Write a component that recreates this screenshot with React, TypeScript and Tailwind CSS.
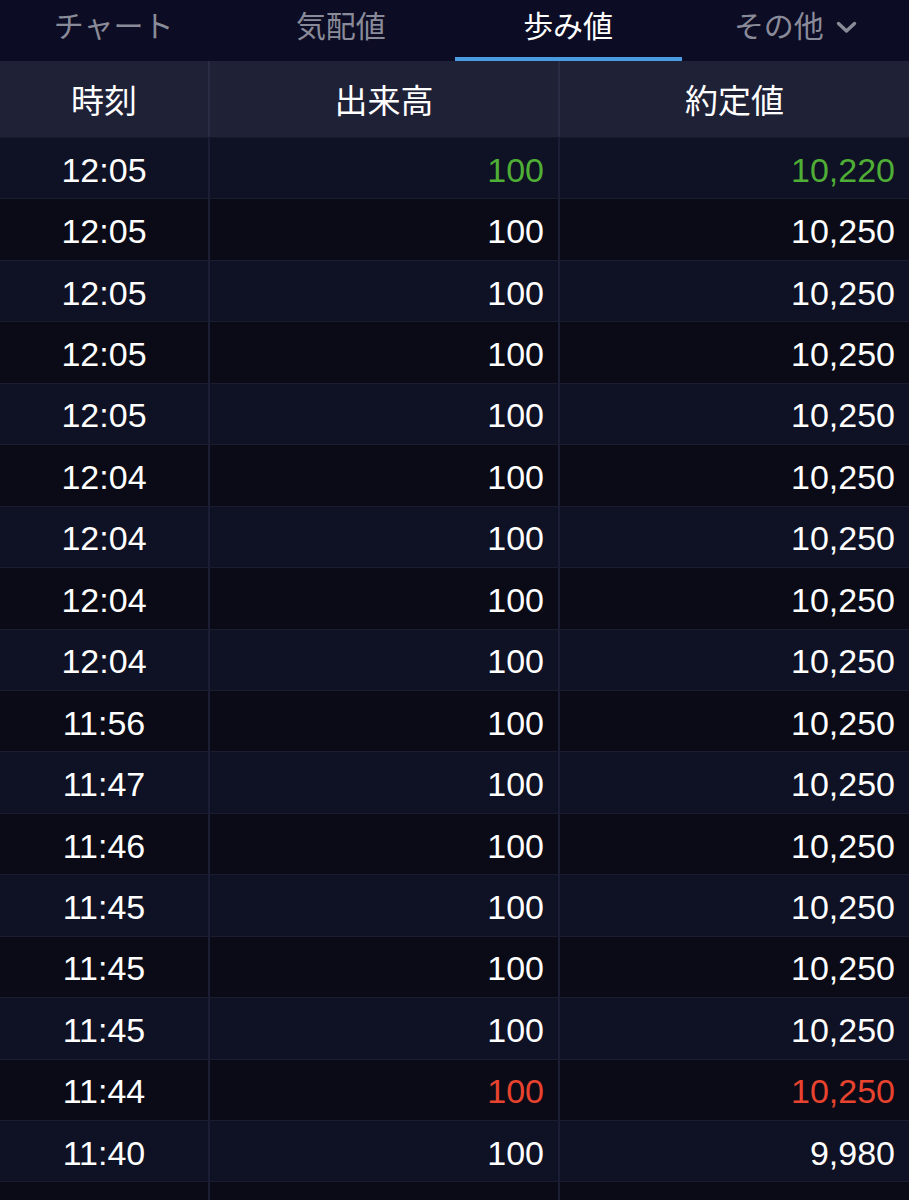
import React from "react";

const rows: [string, string, string, string][] = [
  ["12:05", "100", "10,220", "g"],
  ["12:05", "100", "10,250", "w"],
  ["12:05", "100", "10,250", "w"],
  ["12:05", "100", "10,250", "w"],
  ["12:05", "100", "10,250", "w"],
  ["12:04", "100", "10,250", "w"],
  ["12:04", "100", "10,250", "w"],
  ["12:04", "100", "10,250", "w"],
  ["12:04", "100", "10,250", "w"],
  ["11:56", "100", "10,250", "w"],
  ["11:47", "100", "10,250", "w"],
  ["11:46", "100", "10,250", "w"],
  ["11:45", "100", "10,250", "w"],
  ["11:45", "100", "10,250", "w"],
  ["11:45", "100", "10,250", "w"],
  ["11:44", "100", "10,250", "r"],
  ["11:40", "100", "9,980", "w"],
  ["", "", "", "w"],
];

const font = { fontFamily: '"Liberation Sans", "Noto Sans CJK JP", sans-serif' };

export default function App() {
  return (
    <div className="w-[909px] h-[1200px] overflow-hidden bg-[#0b0c1a] text-white" style={font}>
      {/* Tabs */}
      <div className="flex h-[61px] bg-[#0c0d24]">
        {["チャート", "気配値", "歩み値", "その他"].map((t, i) => (
          <div key={t} className="relative flex-1 flex items-start justify-center pt-[7px]">
            <span className={`text-[30px] leading-[40px] ${i === 2 ? "text-white" : "text-[#8a8b99]"}`}>{t}</span>
            {i === 3 && (
              <svg className="ml-[12px] mt-[13px]" width="21" height="15" viewBox="0 0 21 15">
                <path d="M2.5 3.5 L10.5 11 L18.5 3.5" fill="none" stroke="#8a8b99" strokeWidth="3.4" strokeLinecap="round" strokeLinejoin="round" />
              </svg>
            )}
            {i === 2 && <div className="absolute left-0 right-0 bottom-0 h-[4px] bg-[#4a9be0]" />}
          </div>
        ))}
      </div>
      {/* Header */}
      <div className="flex h-[77px] bg-[#1f2137] border-b border-[#181a2c]">
        <div className="w-[210px] flex items-center justify-center pt-[5px] text-[33px] border-r-2 border-[#2a2c46]">時刻</div>
        <div className="w-[350px] flex items-center justify-center pt-[5px] text-[33px] border-r-2 border-[#2a2c46]">出来高</div>
        <div className="flex-1 flex items-center justify-center pt-[5px] text-[33px]">約定値</div>
      </div>
      {/* Rows */}
      {rows.map((r, i) => {
        const color = r[3] === "g" ? "text-[#4fae36]" : r[3] === "r" ? "text-[#e8432e]" : "text-white";
        return (
          <div
            key={i}
            className={`flex h-[61.45px] border-b border-[#1a1c30] ${i % 2 === 0 ? "bg-[#0f1124]" : "bg-[#0a0b17]"}`}
          >
            <div className="w-[210px] flex items-center justify-center pt-[4px] text-[34px] border-r-2 border-[#1c1e36]">{r[0]}</div>
            <div className={`w-[350px] flex items-center justify-end pt-[4px] pr-[14px] text-[34px] border-r-2 border-[#1c1e36] ${color}`}>{r[1]}</div>
            <div className={`flex-1 flex items-center justify-end pt-[4px] pr-[14px] text-[34px] ${color}`}>{r[2]}</div>
          </div>
        );
      })}
    </div>
  );
}
